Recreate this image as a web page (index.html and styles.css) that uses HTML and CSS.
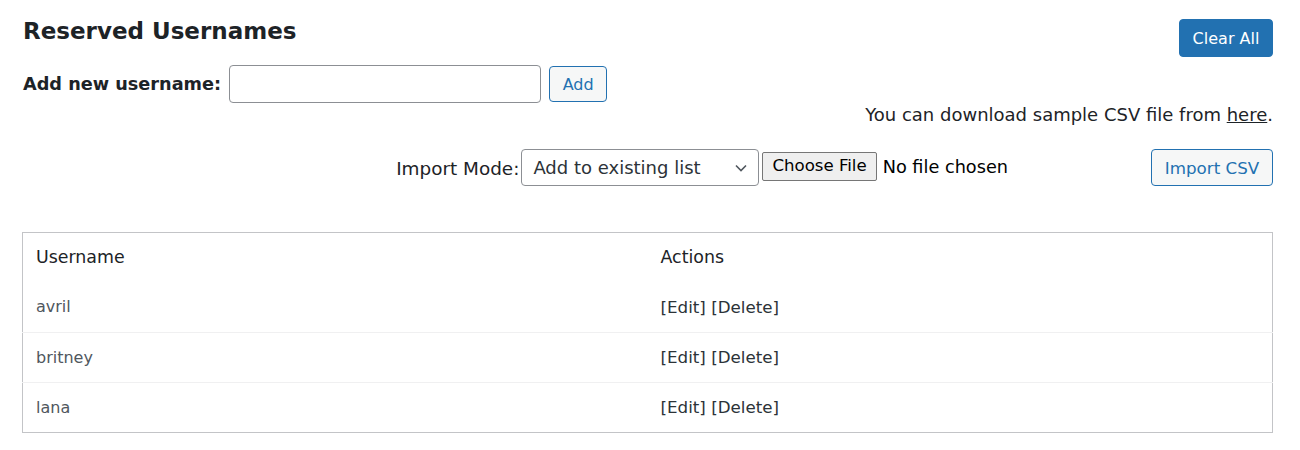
FILE: index.html
```html
<!DOCTYPE html>
<html>
<head>
<meta charset="utf-8">
<link rel="stylesheet" href="styles.css">
</head>
<body>
<div class="wrap">
  <div class="top">
    <h1 class="title">Reserved Usernames</h1>
    <button class="btn btn-primary">Clear All</button>
  </div>
  <div class="add-row">
    <label class="add-label">Add new username:</label>
    <input class="text-input" type="text">
    <button class="btn btn-secondary btn-add">Add</button>
  </div>
  <p class="sample">You can download sample CSV file from <a href="#">here</a>.</p>
  <div class="import-row">
    <div class="import-group">
      <span class="import-label">Import Mode:</span>
      <div class="select">
        <span>Add to existing list</span>
        <svg class="chev" width="14" height="10" viewBox="0 0 14 10"><path d="M2 2.5 L7 7.5 L12 2.5" fill="none" stroke="#50575e" stroke-width="1.6"/></svg>
      </div>
      <div class="file">
        <span class="file-btn">Choose File</span>
        <span class="file-text">No file chosen</span>
      </div>
    </div>
    <button class="btn btn-secondary btn-import">Import CSV</button>
  </div>
  <table class="list">
    <thead>
      <tr><th>Username</th><th>Actions</th></tr>
    </thead>
    <tbody>
      <tr><td class="name">avril</td><td class="act">[Edit] [Delete]</td></tr>
      <tr><td class="name">britney</td><td class="act">[Edit] [Delete]</td></tr>
      <tr><td class="name">lana</td><td class="act">[Edit] [Delete]</td></tr>
    </tbody>
  </table>
</div>
</body>
</html>
```

FILE: styles.css
```css
html, body {
  margin: 0;
  padding: 0;
  background: #fff;
}
body {
  font-family: "DejaVu Sans", sans-serif;
  font-size: 16px;
  color: #1d2327;
}
.wrap {
  padding: 19px 27px 0 22px;
}
.top {
  display: flex;
  justify-content: space-between;
  align-items: flex-start;
}
.title {
  margin: 0;
  padding-left: 1px;
  font-size: 23px;
  font-weight: 700;
  line-height: 24px;
  color: #1d2327;
}
.btn {
  font-family: inherit;
  font-size: 16px;
  border-radius: 4px;
  cursor: pointer;
  padding: 0 12px;
  box-sizing: border-box;
}
.btn-primary {
  background: #2271b1;
  color: #fff;
  border: 1px solid #2271b1;
  height: 38px;
  width: 94px;
  padding: 0;
}
.btn-secondary {
  background: #f6f7f7;
  color: #2271b1;
  border: 1px solid #2271b1;
}
.add-row {
  display: flex;
  align-items: center;
  margin-top: 8px;
  padding-left: 1px;
}
.add-label {
  font-weight: 700;
  font-size: 17.7px;
  margin-right: 8px;
}
.text-input {
  width: 312px;
  height: 38px;
  box-sizing: border-box;
  border: 1px solid #8c8f94;
  border-radius: 4px;
  margin: 0;
}
.btn-add {
  margin-left: 8px;
  height: 36px;
  width: 58px;
  padding: 0;
}
.sample {
  margin: 0;
  text-align: right;
  line-height: 24px;
  font-size: 18px;
  color: #1d2327;
}
.sample a {
  color: #1d2327;
}
.import-row {
  display: flex;
  justify-content: flex-end;
  align-items: center;
  margin-top: 22px;
}
.import-group {
  display: flex;
  align-items: center;
  margin-right: 143px;
}
.import-label {
  font-size: 18.4px;
  margin-right: 2px;
  margin-top: 2px;
}
.select {
  display: flex;
  justify-content: space-between;
  align-items: center;
  width: 238px;
  height: 37px;
  box-sizing: border-box;
  border: 1px solid #8c8f94;
  border-radius: 4px;
  padding: 0 10px 0 11px;
  font-size: 18px;
  color: #2c3338;
}
.file {
  display: flex;
  align-items: center;
  margin-left: 3px;
  margin-top: -2px;
}
.file-btn {
  display: inline-block;
  background: #efefef;
  border: 1px solid #767676;
  border-radius: 2px;
  padding: 2px 9px 3px;
  color: #000;
  font-size: 16.6px;
  line-height: 22px;
}
.file-text {
  margin-left: 6px;
  font-size: 17.7px;
  color: #000;
}
.btn-import {
  height: 37px;
  width: 122px;
  padding: 0;
  font-size: 16.7px;
}
.list {
  margin-top: 46px;
  width: 100%;
  border-collapse: collapse;
  border: 1px solid #c3c4c7;
  table-layout: fixed;
}
.list th {
  text-align: left;
  font-weight: 400;
  font-size: 17.4px;
  color: #1d2327;
  padding: 12px 13px 13px;
  height: 50px;
  box-sizing: border-box;
}
.list td {
  padding: 12px 13px 13px;
  height: 50px;
  box-sizing: border-box;
  border-top: 1px solid #f0f0f1;
}
.list tbody tr:first-child td {
  border-top: none;
}
.name {
  color: #50575e;
}
.act {
  color: #2c3338;
  font-size: 16.7px;
}
```
